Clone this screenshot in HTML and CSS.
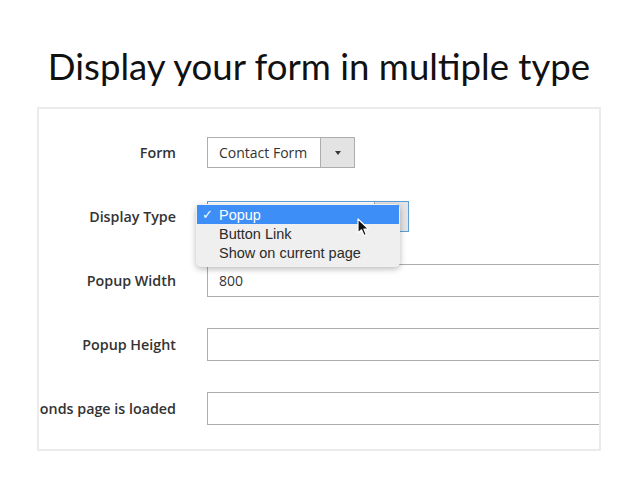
FILE: index.html
```html
<!doctype html>
<html lang="en">
    <head>
        <meta charset="UTF-8" />
        <title>Display Type</title>
        <link rel="stylesheet" href="styles.css">
    </head>
    <body>
        <h1 class="slide-title">Display your form in multiple type</h1>

        <div class="form-panel">
            <div class="form-row">
                <div class="form-label">Form</div>
                <div class="select-box select-short">
                    <span class="select-value">Contact Form</span>
                    <span class="select-arrow"><span class="caret"></span></span>
                </div>
            </div>

            <div class="form-row">
                <div class="form-label">Display Type</div>
                <div class="select-box select-focus">
                    <!-- value is hidden under the open menu -->
                    <span class="select-value"></span>
                    <span class="select-arrow"><span class="caret"></span></span>

                    <ul class="dropdown-menu">
                        <li class="dropdown-item active"><span class="check">✓</span>Popup</li>
                        <li class="dropdown-item"><span class="check"></span>Button Link</li>
                        <li class="dropdown-item"><span class="check"></span>Show on current page</li>
                    </ul>

                    <svg class="mouse-cursor" width="13" height="19" viewBox="0 0 13 19">
                        <path d="M1 1 L1 15 L4.5 11.8 L7 17.5 L9.3 16.5 L6.9 11 L11.5 11 Z"
                              fill="#111" stroke="#fff" stroke-width="1.2" stroke-linejoin="round" />
                    </svg>
                </div>
            </div>

            <div class="form-row">
                <div class="form-label">Popup Width</div>
                <div class="text-input">800</div>
            </div>

            <div class="form-row">
                <div class="form-label">Popup Height</div>
                <div class="text-input"></div>
            </div>

            <div class="form-row">
                <div class="form-label">onds page is loaded</div>
                <div class="text-input"></div>
            </div>
        </div>
    </body>
</html>
```

FILE: styles.css
```css
body {
    margin: 0;
    background-color: #ffffff;
    font-family: "Open Sans", Arial, sans-serif;
    color: #303030;
}
.slide-title {
    margin: 0;
    padding-top: 40px;
    height: 67px;
    text-align: center;
    font-family: Lato, "Open Sans", sans-serif;
    font-weight: 400;
    font-size: 36.6px;
    line-height: 52px;
    color: #111111;
}
.form-panel {
    margin-left: 37px;
    width: 560px;
    border: 2px solid #ebebeb;
    padding: 27px 0 24px 0;
    overflow: hidden;
}
.form-row {
    display: flex;
    align-items: center;
    height: 33px;
    margin-bottom: 31px;
}
.form-row:last-child {
    margin-bottom: 0;
}
.form-label {
    width: 137px;
    flex-shrink: 0;
    display: flex;
    justify-content: flex-end;
    overflow: hidden;
    white-space: nowrap;
    margin-right: 31px;
    font-size: 14.3px;
    font-weight: 600;
    color: #333333;
}
.select-box {
    position: relative;
    display: flex;
    height: 31px;
    box-sizing: border-box;
    border: 1px solid #adadad;
    background-color: #ffffff;
    font-size: 14px;
}
.select-short {
    width: 148px;
}
.select-focus {
    width: 202px;
    border-color: #5c9fd6;
}
.select-value {
    flex: 1;
    padding-left: 11px;
    line-height: 29px;
    color: #333333;
}
.select-arrow {
    width: 33px;
    border-left: 1px solid #adadad;
    background-color: #e3e3e3;
    display: flex;
    align-items: center;
    justify-content: center;
}
.caret {
    width: 0;
    height: 0;
    border-left: 3px solid transparent;
    border-right: 3px solid transparent;
    border-top: 4px solid #41362f;
}
.text-input {
    flex: 1;
    height: 33px;
    box-sizing: border-box;
    margin-right: -2px;
    border: 1px solid #adadad;
    padding-left: 11px;
    font-size: 14px;
    line-height: 31px;
    color: #333333;
}
.dropdown-menu {
    position: absolute;
    left: -12px;
    top: 2px;
    width: 204px;
    margin: 0;
    padding: 1px 0 5px 0;
    list-style: none;
    background-color: #efefef;
    border-radius: 5px;
    box-shadow: 0 2px 6px rgba(0, 0, 0, 0.28);
    font-family: "Liberation Sans", Arial, sans-serif;
    font-size: 14.5px;
}
.dropdown-item {
    display: flex;
    align-items: center;
    height: 19px;
    margin: 0 1px;
    color: #2a2a2a;
}
.dropdown-item.active {
    background-color: #3d8ef6;
    color: #ffffff;
}
.check {
    width: 22px;
    padding-left: 5px;
    box-sizing: border-box;
    font-family: "DejaVu Sans", sans-serif;
    font-size: 13px;
    font-weight: 700;
}
.mouse-cursor {
    position: absolute;
    left: 149px;
    top: 16px;
}
```
